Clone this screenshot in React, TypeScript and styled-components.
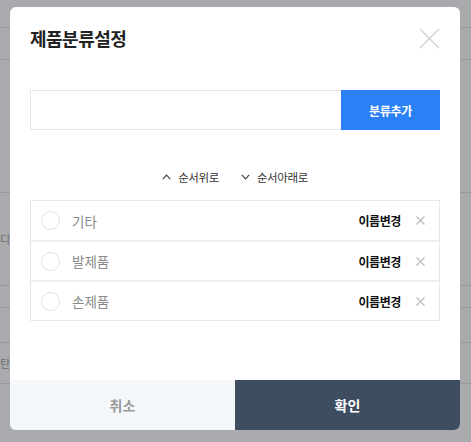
import React, { FC, useState } from "react";
import styled, { createGlobalStyle } from "styled-components";

const GlobalStyle = createGlobalStyle`
  html, body {
    margin: 0;
    padding: 0;
    background: #a8aaad;
    font-family: "Noto Sans CJK KR", "Noto Sans", sans-serif;
  }
`;

const Screen = styled.div`
  position: relative;
  width: 471px;
  height: 442px;
  overflow: hidden;
  background: #a8aaad;
`;

// faint page behind the overlay
const BackPage = styled.div`
  display: flex;
  flex-direction: column;
  width: 100%;
`;

const BackRow = styled.div<{ $h: number }>`
  height: ${p => p.$h}px;
  border-bottom: 1px solid #96989b;
  display: flex;
  align-items: center;
  font-size: 11px;
  color: #6d6f72;
`;

const Modal = styled.section`
  position: absolute;
  left: 10px;
  top: 7px;
  width: 450px;
  height: 423px;
  background: #ffffff;
  border-radius: 6px;
  overflow: hidden;
  display: flex;
  flex-direction: column;
`;

const Header = styled.header`
  display: flex;
  align-items: center;
  justify-content: space-between;
  padding: 16px 20px 0 20px;
  height: 30px;
`;

const Title = styled.h2`
  margin: 0;
  font-size: 18px;
  font-weight: 700;
  color: #222;
  letter-spacing: -0.5px;
`;

const CloseButton = styled.button`
  border: none;
  background: none;
  padding: 0;
  width: 21px;
  height: 21px;
  cursor: pointer;
  display: flex;
`;

const Body = styled.div`
  flex: 1;
  padding: 0 20px;
  display: flex;
  flex-direction: column;
`;

const AddRow = styled.div`
  display: flex;
  margin-top: 37px;
  height: 40px;
`;

const NameInput = styled.input`
  flex: 1;
  box-sizing: border-box;
  height: 40px;
  border: 1px solid #e6e6e6;
  border-right: none;
  outline: none;
  padding: 0 12px;
  font-family: inherit;
  font-size: 13px;
`;

const AddButton = styled.button`
  width: 99px;
  height: 40px;
  border: none;
  background: #2b80f5;
  color: #fff;
  font-family: inherit;
  font-size: 12px;
  font-weight: 700;
  letter-spacing: -0.3px;
  cursor: pointer;
`;

const OrderBar = styled.div`
  display: flex;
  justify-content: center;
  gap: 22px;
  margin-top: 37px;
  height: 20px;
  align-items: center;
`;

const OrderButton = styled.button`
  display: flex;
  align-items: center;
  gap: 7px;
  border: none;
  background: none;
  padding: 0;
  font-family: inherit;
  font-size: 11.5px;
  color: #333;
  letter-spacing: -0.4px;
  cursor: pointer;
`;

const List = styled.ul`
  list-style: none;
  margin: 13px 0 0 0;
  padding: 0;
  border: 1px solid #e8e8e8;
`;

const Row = styled.li`
  display: flex;
  align-items: center;
  height: 39px;
  padding: 0 14px 0 10px;
  & + & {
    border-top: 2px solid #eeeeee;
    height: 38px;
  }
`;

const Radio = styled.span<{ $checked: boolean }>`
  box-sizing: border-box;
  width: 19px;
  height: 19px;
  border-radius: 50%;
  border: 1px solid ${p => (p.$checked ? "#2b80f5" : "#e2e2e2")};
  background: ${p => (p.$checked ? "#2b80f5" : "#fff")};
  cursor: pointer;
`;

const Label = styled.span`
  flex: 1;
  margin-left: 12px;
  font-size: 13.5px;
  color: #8a8a8a;
`;

const RenameButton = styled.button`
  border: none;
  background: none;
  padding: 0;
  font-family: inherit;
  font-size: 12px;
  font-weight: 700;
  color: #111;
  letter-spacing: -0.4px;
  cursor: pointer;
`;

const RemoveButton = styled.button`
  border: none;
  background: none;
  padding: 0;
  margin-left: 14px;
  width: 10px;
  height: 10px;
  display: flex;
  align-items: center;
  justify-content: center;
  cursor: pointer;
`;

const Footer = styled.footer`
  display: grid;
  grid-template-columns: 225px 225px;
  height: 50px;
`;

const FooterButton = styled.button<{ $primary?: boolean }>`
  border: none;
  font-family: inherit;
  font-size: 14px;
  font-weight: 700;
  background: ${p => (p.$primary ? "#3e4d5f" : "#f4f8fa")};
  color: ${p => (p.$primary ? "#ffffff" : "#9a9a9a")};
  cursor: pointer;
`;

const Chevron: FC<{ up?: boolean }> = ({ up }) => (
  <svg width="9" height="6" viewBox="0 0 9 6" fill="none">
    <path
      d={up ? "M0.8 5.2 L4.5 1.2 L8.2 5.2" : "M0.8 0.8 L4.5 4.8 L8.2 0.8"}
      stroke="#444"
      strokeWidth="1.2"
    />
  </svg>
);

const categories = ["기타", "발제품", "손제품"];

export default function App() {
  const [selected, setSelected] = useState<number | null>(null);
  const [name, setName] = useState("");

  return (
    <Screen>
      <GlobalStyle />
      <BackPage>
        <BackRow $h={27} />
        <BackRow $h={31} />
        <BackRow $h={132} />
        <BackRow $h={92}>디</BackRow>
        <BackRow $h={21} />
        <BackRow $h={34} />
        <BackRow $h={40}>탄</BackRow>
      </BackPage>
      <Modal>
        <Header>
          <Title>제품분류설정</Title>
          <CloseButton aria-label="close">
            <svg width="21" height="21" viewBox="0 0 21 21">
              <path d="M1 1 L20 20 M20 1 L1 20" stroke="#d0d0d0" strokeWidth="1.3" />
            </svg>
          </CloseButton>
        </Header>
        <Body>
          <AddRow>
            <NameInput value={name} onChange={e => setName(e.target.value)} />
            <AddButton>분류추가</AddButton>
          </AddRow>
          <OrderBar>
            <OrderButton>
              <Chevron up />
              순서위로
            </OrderButton>
            <OrderButton>
              <Chevron />
              순서아래로
            </OrderButton>
          </OrderBar>
          <List>
            {categories.map((c, i) => (
              <Row key={c}>
                <Radio $checked={selected === i} onClick={() => setSelected(i)} />
                <Label>{c}</Label>
                <RenameButton>이름변경</RenameButton>
                <RemoveButton aria-label="remove">
                  <svg width="9" height="9" viewBox="0 0 9 9" style={{ display: "block" }}>
                    <path d="M0.5 0.5 L8.5 8.5 M8.5 0.5 L0.5 8.5" stroke="#bdbdbd" strokeWidth="1.2" />
                  </svg>
                </RemoveButton>
              </Row>
            ))}
          </List>
        </Body>
        <Footer>
          <FooterButton>취소</FooterButton>
          <FooterButton $primary>확인</FooterButton>
        </Footer>
      </Modal>
    </Screen>
  );
}
